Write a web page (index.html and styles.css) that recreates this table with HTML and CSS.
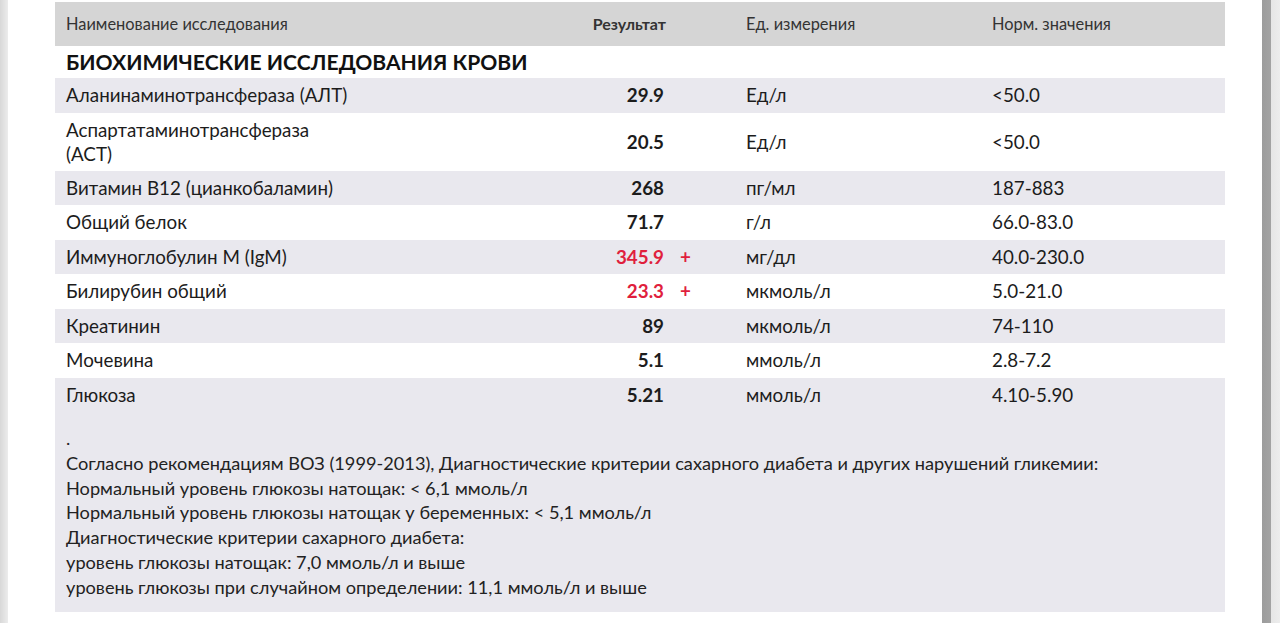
FILE: index.html
```html
<!DOCTYPE html>
<html lang="ru">
<head>
<meta charset="utf-8">
<title>Результаты анализов</title>
<link rel="stylesheet" href="styles.css">
</head>
<body>
<div class="frame">
  <div class="edge-left"></div>
  <main class="page">
    <div class="report">
      <div class="row head">
        <div class="c-name">Наименование исследования</div>
        <div class="c-res">Результат</div>
        <div class="c-flag"></div>
        <div class="c-unit">Ед. измерения</div>
        <div class="c-norm">Норм. значения</div>
      </div>
      <div class="section">БИОХИМИЧЕСКИЕ ИССЛЕДОВАНИЯ КРОВИ</div>
      <div class="row alt">
        <div class="c-name">Аланинаминотрансфераза (АЛТ)</div>
        <div class="c-res">29.9</div>
        <div class="c-flag"></div>
        <div class="c-unit">Ед/л</div>
        <div class="c-norm">&lt;50.0</div>
      </div>
      <div class="row">
        <div class="c-name">Аспартатаминотрансфераза (АСТ)</div>
        <div class="c-res">20.5</div>
        <div class="c-flag"></div>
        <div class="c-unit">Ед/л</div>
        <div class="c-norm">&lt;50.0</div>
      </div>
      <div class="row alt">
        <div class="c-name">Витамин B12 (цианкобаламин)</div>
        <div class="c-res">268</div>
        <div class="c-flag"></div>
        <div class="c-unit">пг/мл</div>
        <div class="c-norm">187-883</div>
      </div>
      <div class="row">
        <div class="c-name">Общий белок</div>
        <div class="c-res">71.7</div>
        <div class="c-flag"></div>
        <div class="c-unit">г/л</div>
        <div class="c-norm">66.0-83.0</div>
      </div>
      <div class="row alt">
        <div class="c-name">Иммуноглобулин M (IgM)</div>
        <div class="c-res high">345.9</div>
        <div class="c-flag high">+</div>
        <div class="c-unit">мг/дл</div>
        <div class="c-norm">40.0-230.0</div>
      </div>
      <div class="row">
        <div class="c-name">Билирубин общий</div>
        <div class="c-res high">23.3</div>
        <div class="c-flag high">+</div>
        <div class="c-unit">мкмоль/л</div>
        <div class="c-norm">5.0-21.0</div>
      </div>
      <div class="row alt">
        <div class="c-name">Креатинин</div>
        <div class="c-res">89</div>
        <div class="c-flag"></div>
        <div class="c-unit">мкмоль/л</div>
        <div class="c-norm">74-110</div>
      </div>
      <div class="row">
        <div class="c-name">Мочевина</div>
        <div class="c-res">5.1</div>
        <div class="c-flag"></div>
        <div class="c-unit">ммоль/л</div>
        <div class="c-norm">2.8-7.2</div>
      </div>
      <div class="row alt">
        <div class="c-name">Глюкоза</div>
        <div class="c-res">5.21</div>
        <div class="c-flag"></div>
        <div class="c-unit">ммоль/л</div>
        <div class="c-norm">4.10-5.90</div>
      </div>
      <div class="note">
        <p>.</p>
        <p>Согласно рекомендациям ВОЗ (1999-2013), Диагностические критерии сахарного диабета и других нарушений гликемии:</p>
        <p>Нормальный уровень глюкозы натощак: &lt; 6,1 ммоль/л</p>
        <p>Нормальный уровень глюкозы натощак у беременных: &lt; 5,1 ммоль/л</p>
        <p>Диагностические критерии сахарного диабета:</p>
        <p>уровень глюкозы натощак: 7,0 ммоль/л и выше</p>
        <p>уровень глюкозы при случайном определении: 11,1 ммоль/л и выше</p>
      </div>
    </div>
  </main>
  <div class="edge-right"></div>
</div>
</body>
</html>
```

FILE: styles.css
```css
* { box-sizing: border-box; }

html, body {
  margin: 0;
  padding: 0;
  background: #ffffff;
}

body {
  font-family: Lato, "Open Sans", "Liberation Sans", sans-serif;
  color: #1c1c1c;
  height: 623px;
  overflow: hidden;
}

.frame {
  display: flex;
  height: 623px;
}

.edge-left {
  width: 8px;
  flex: none;
  background: linear-gradient(to right, #d8d8d8, #ececec);
}

.edge-right {
  width: 18px;
  flex: none;
  background: linear-gradient(to right, #9c9c9c 0, #a3a3a3 9px, #e6e6e6 9px, #ededed 18px);
}

.page {
  flex: 1;
  padding: 2px 29px 0 47px;
}

.report {
  width: 1170px;
}

.row {
  display: grid;
  grid-template-columns: 293px 322px 65px 246px 244px;
  align-items: center;
  min-height: 34.5px;
  padding: 5px 0;
  font-size: 18.8px;
  line-height: 24px;
}

.row.alt { background: #e9e8ee; }

.row.head {
  background: #d5d5d5;
  height: 44px;
  font-size: 16.4px;
  color: #333333;
}

.c-name { padding-left: 11px; }
.c-res { text-align: right; padding-right: 6px; font-weight: 700; }
.c-flag { padding-left: 10px; font-weight: 700; }
.c-unit { padding-left: 11px; }
.c-norm { padding-left: 11px; }

.head .c-res { padding-right: 4px; font-size: 16px; }

.high { color: #e01f3d; }

.section {
  height: 32px;
  padding-left: 11px;
  font-size: 21.1px;
  font-weight: 700;
  line-height: 32px;
  color: #111111;
}

.note {
  background: #e9e8ee;
  padding: 14px 11px 12px;
  font-size: 18.2px;
  line-height: 24.8px;
  color: #222222;
}

.note p { margin: 0; }
```
